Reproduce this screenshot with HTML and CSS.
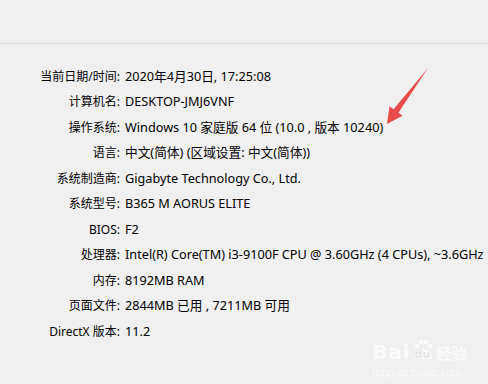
FILE: index.html
```html
<!DOCTYPE html>
<html lang="zh-CN">
<head>
<meta charset="utf-8">
<link rel="stylesheet" href="styles.css">
</head>
<body>
<div class="page">
  <div class="top"></div>
  <div class="info">
    <div class="label">当前日期/时间:</div><div class="value">2020年4月30日, 17:25:08</div>
    <div class="label">计算机名:</div><div class="value">DESKTOP-JMJ6VNF</div>
    <div class="label">操作系统:</div><div class="value">Windows 10 家庭版 64 位 (10.0 , 版本 10240)</div>
    <div class="label">语言:</div><div class="value">中文(简体) (区域设置: 中文(简体))</div>
    <div class="label">系统制造商:</div><div class="value">Gigabyte Technology Co., Ltd.</div>
    <div class="label">系统型号:</div><div class="value">B365 M AORUS ELITE</div>
    <div class="label">BIOS:</div><div class="value">F2</div>
    <div class="label">处理器:</div><div class="value">Intel(R) Core(TM) i3-9100F CPU @ 3.60GHz (4 CPUs), ~3.6GHz</div>
    <div class="label">内存:</div><div class="value">8192MB RAM</div>
    <div class="label">页面文件:</div><div class="value">2844MB 已用 , 7211MB 可用</div>
    <div class="label">DirectX 版本:</div><div class="value">11.2</div>
  </div>
  <svg class="arrow" width="488" height="384" viewBox="0 0 488 384">
    <polygon points="428,68 398.4,112.8 402.5,115.7 387,124 389.5,106.3 393.6,109.2" fill="#e94b4b"/>
  </svg>
  <div class="watermark">
    <div class="wm-row">
      <span class="wm-bai">Bai</span>
      <span class="wm-du">
        <svg width="24" height="22" viewBox="0 0 24 22">
          <circle cx="6" cy="7" r="2.3" fill="#fbfbfb"/>
          <circle cx="10" cy="3" r="2.3" fill="#fbfbfb"/>
          <circle cx="15" cy="3" r="2.3" fill="#fbfbfb"/>
          <circle cx="19" cy="7" r="2.3" fill="#fbfbfb"/>
          <path d="M4 20 C4 14 8 10 12.5 10 C17 10 21 14 21 20 Z" fill="#fbfbfb"/>
        </svg>
        <span class="wm-du-text">du</span>
      </span>
      <span class="wm-jy">经验</span>
    </div>
    <div class="wm-url">jingyan.baidu.com</div>
  </div>
</div>
</body>
</html>
```
FILE: styles.css
```css
html, body {
  margin: 0;
  padding: 0;
  background: #f0f0f0;
}
.page {
  position: relative;
  width: 488px;
  height: 384px;
  overflow: hidden;
  background: #f0f0f0;
  font-family: "Noto Sans", "Noto Sans CJK SC", sans-serif;
  font-size: 12px;
  color: #000;
}
.top {
  height: 43px;
  border-bottom: 1px solid #d8d8d8;
}
.info {
  display: grid;
  grid-template-columns: 120px 1fr;
  column-gap: 5px;
  padding-top: 19.5px;
  line-height: 25.5px;
  white-space: nowrap;
}
.label {
  text-align: right;
  font-size: 12px;
}
.value {
  font-size: 12.7px;
  overflow: hidden;
}
.arrow {
  position: absolute;
  left: 0;
  top: 0;
}
.watermark {
  position: absolute;
  left: 372px;
  top: 337px;
  color: #fbfbfb;
}
.wm-row {
  display: flex;
  align-items: flex-end;
  height: 26px;
}
.wm-bai {
  font-family: "DejaVu Sans", sans-serif;
  font-weight: bold;
  font-size: 20px;
  line-height: 22px;
  letter-spacing: 1px;
}
.wm-du {
  position: relative;
  width: 24px;
  height: 24px;
}
.wm-du svg {
  position: absolute;
  left: 0;
  top: 0;
}
.wm-du-text {
  position: absolute;
  left: 4px;
  top: 9px;
  font-family: "DejaVu Sans", sans-serif;
  font-weight: bold;
  font-size: 11px;
  color: #e6e6e6;
}
.wm-jy {
  font-family: "Noto Sans CJK SC", sans-serif;
  font-weight: bold;
  font-size: 15px;
  line-height: 20px;
  margin-left: 2px;
}
.wm-url {
  font-family: "Liberation Serif", serif;
  font-size: 12px;
  line-height: 14px;
  margin-top: 2px;
}
```
